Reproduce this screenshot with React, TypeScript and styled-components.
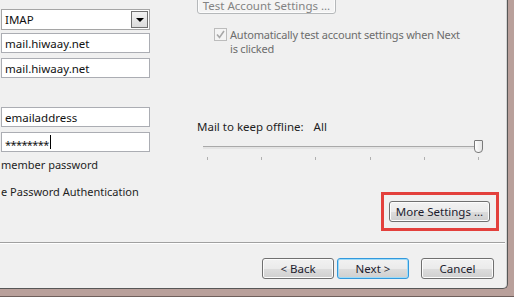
import styled, { createGlobalStyle } from 'styled-components';

const GlobalStyle = createGlobalStyle`
  html, body {
    margin: 0;
    padding: 0;
    overflow: hidden;
    background: #b9a09b;
  }
  body {
    font-family: "Noto Sans", "Open Sans", "Liberation Sans", sans-serif;
    font-size: 11px;
    color: #1e1e1e;
  }
`;

const Frame = styled.div`
  width: 514px;
  height: 297px;
  box-sizing: border-box;
  background: #b9a09b;
  border-bottom: 1px solid #6f5f5c;
  display: flex;
  align-items: flex-start;
`;

const Client = styled.div`
  width: 508px;
  height: 289px;
  box-sizing: border-box;
  background: #f0f0f0;
  border-right: 1px solid #575757;
  border-bottom: 1px solid #575757;
  border-bottom-right-radius: 5px;
  box-shadow: inset -1px 0 0 #d4d4d4;
  display: flex;
  flex-direction: column;
  overflow: hidden;
`;

const Content = styled.div`
  height: 243px;
  flex: none;
  display: grid;
  grid-template-columns: 149px 1fr;
  column-gap: 47px;
  padding-left: 1px;
  box-sizing: border-box;
  border-bottom: 1px solid #a0a0a0;
  margin-right: 2px;
`;

const Separator = styled.div`
  height: 1px;
  background: #ffffff;
  margin-right: 2px;
`;

const LeftColumn = styled.div`
  display: flex;
  flex-direction: column;
`;

const Field = styled.div<{ $top: number }>`
  margin-top: ${p => p.$top}px;
  height: 20px;
  box-sizing: border-box;
  border: 1px solid #abadb3;
  background: #ffffff;
  display: flex;
  align-items: center;
  padding-left: 3px;
  font-size: 11.5px;
  color: #111;
  white-space: nowrap;
`;

const Select = styled(Field)`
  height: 21px;
  border-color: #a5a5a5;
  justify-content: space-between;
  padding-right: 1px;
`;

const DropButton = styled.div`
  width: 17px;
  height: 17px;
  box-sizing: border-box;
  border: 1px solid #707070;
  background: linear-gradient(#f2f2f2, #dcdcdc);
  display: flex;
  align-items: center;
  justify-content: center;
`;

const Arrow = styled.div`
  width: 0;
  height: 0;
  border-left: 4px solid transparent;
  border-right: 4px solid transparent;
  border-top: 4px solid #000;
  margin-top: 1px;
`;

const Caret = styled.span`
  display: inline-block;
  width: 1px;
  height: 14px;
  background: #000;
  margin-left: 1px;
`;

const Stars = styled.span`
  font-size: 11px;
  letter-spacing: -0.6px;
  position: relative;
  top: 2px;
`;

const LabelLine = styled.div<{ $top: number }>`
  margin-top: ${p => p.$top}px;
  line-height: 15px;
  white-space: nowrap;
  color: #1e1e1e;
`;

const RightColumn = styled.div`
  display: flex;
  flex-direction: column;
  align-items: flex-start;
`;

const Button = styled.div<{ $width: number; $default?: boolean; $disabled?: boolean }>`
  width: ${p => p.$width}px;
  height: 21px;
  box-sizing: border-box;
  border: 1px solid ${p => (p.$disabled ? '#b5b8ba' : p.$default ? '#3399dd' : '#707070')};
  border-radius: 3px;
  background: ${p =>
    p.$disabled
      ? '#f4f4f4'
      : 'linear-gradient(#f2f2f2 0%, #ebebeb 50%, #dddddd 51%, #cfcfcf 100%)'};
  box-shadow: ${p => (p.$default ? 'inset 0 0 0 1px #9fdcf8' : 'inset 0 0 0 1px #fcfcfc')};
  color: ${p => (p.$disabled ? '#838383' : '#1c1c2e')};
  display: flex;
  align-items: center;
  justify-content: center;
  white-space: nowrap;
  font-size: 11.5px;
`;

const TestButton = styled(Button)`
  margin-top: -3px;
  height: 17px;
  line-height: 12px;
  align-items: flex-end;
  padding-bottom: 1px;
`;

const CheckRow = styled.div`
  margin-top: 14px;
  margin-left: 17px;
  display: flex;
  align-items: flex-start;
  gap: 3px;
  color: #6d6d6d;
  line-height: 14px;
  letter-spacing: -0.2px;
`;

const CheckBox = styled.div`
  width: 13px;
  height: 13px;
  box-sizing: border-box;
  border: 1px solid #bcbcbc;
  background: #f4f4f4;
  flex: none;
  display: flex;
  align-items: center;
  justify-content: center;
`;

const OfflineLabel = styled.div`
  margin-top: 63px;
  line-height: 15px;
  white-space: nowrap;
  font-size: 11.5px;
`;

const Value = styled.span`
  margin-left: 10px;
`;

const Slider = styled.div`
  margin-top: 6px;
  margin-left: 6px;
  width: 279px;
  display: flex;
  flex-direction: column;
`;

const TrackArea = styled.div`
  position: relative;
  height: 14px;
  display: flex;
  align-items: center;
`;

const Track = styled.div`
  width: 274px;
  height: 2px;
  border-top: 1px solid #a9a9a9;
  background: #e4e4e4;
`;

const Thumb = styled.div`
  position: absolute;
  left: 271px;
  top: 0;
  width: 9px;
  height: 13px;
  box-sizing: border-box;
  border: 1px solid #7a7a7a;
  border-radius: 1px 1px 4px 4px;
  background: linear-gradient(90deg, #ffffff, #e6e6e6);
`;

const Ticks = styled.div`
  margin-top: 3px;
  margin-left: 4px;
  width: 272px;
  height: 3px;
  display: flex;
  justify-content: space-between;
`;

const Tick = styled.div`
  width: 1px;
  height: 3px;
  background: #b0b0b0;
`;

const Highlight = styled.div`
  margin-top: 32px;
  margin-left: 184px;
  padding: 6px 6px 6px 5px;
  border: 3px solid #e3403c;
  display: flex;
`;

const ButtonBar = styled.div`
  flex: 1;
  display: flex;
  justify-content: flex-end;
  align-items: flex-start;
  padding-top: 14px;
  padding-right: 13px;
  gap: 3px;
`;

const CancelButton = styled(Button)`
  margin-left: 9px;
`;

export default function App() {
  return (
    <>
      <GlobalStyle />
      <Frame>
        <Client>
          <Content>
            <LeftColumn>
              <Select $top={9}>
                <span>IMAP</span>
                <DropButton>
                  <Arrow />
                </DropButton>
              </Select>
              <Field $top={3}>mail.hiwaay.net</Field>
              <Field $top={5}>mail.hiwaay.net</Field>
              <Field $top={29}>emailaddress</Field>
              <Field $top={5}>
                <Stars>********</Stars>
                <Caret />
              </Field>
              <LabelLine $top={5}>member password</LabelLine>
              <LabelLine $top={12}>e Password Authentication</LabelLine>
            </LeftColumn>
            <RightColumn>
              <TestButton $width={139} $disabled>
                Test Account Settings ...
              </TestButton>
              <CheckRow>
                <CheckBox>
                  <svg width="9" height="9" viewBox="0 0 9 9">
                    <path d="M1 4.5 L3.5 7.5 L8 1" fill="none" stroke="#a8a8a8" strokeWidth="1.6" />
                  </svg>
                </CheckBox>
                <div>
                  Automatically test account settings when Next
                  <br />
                  is clicked
                </div>
              </CheckRow>
              <OfflineLabel>
                Mail to keep offline:<Value>All</Value>
              </OfflineLabel>
              <Slider>
                <TrackArea>
                  <Track />
                  <Thumb />
                </TrackArea>
                <Ticks>
                  {[0, 1, 2, 3, 4, 5].map(i => (
                    <Tick key={i} />
                  ))}
                </Ticks>
              </Slider>
              <Highlight>
                <Button $width={101}>More Settings ...</Button>
              </Highlight>
            </RightColumn>
          </Content>
          <Separator />
          <ButtonBar>
            <Button $width={72}>&lt; Back</Button>
            <Button $width={72} $default>
              Next &gt;
            </Button>
            <CancelButton $width={73}>Cancel</CancelButton>
          </ButtonBar>
        </Client>
      </Frame>
    </>
  );
}
